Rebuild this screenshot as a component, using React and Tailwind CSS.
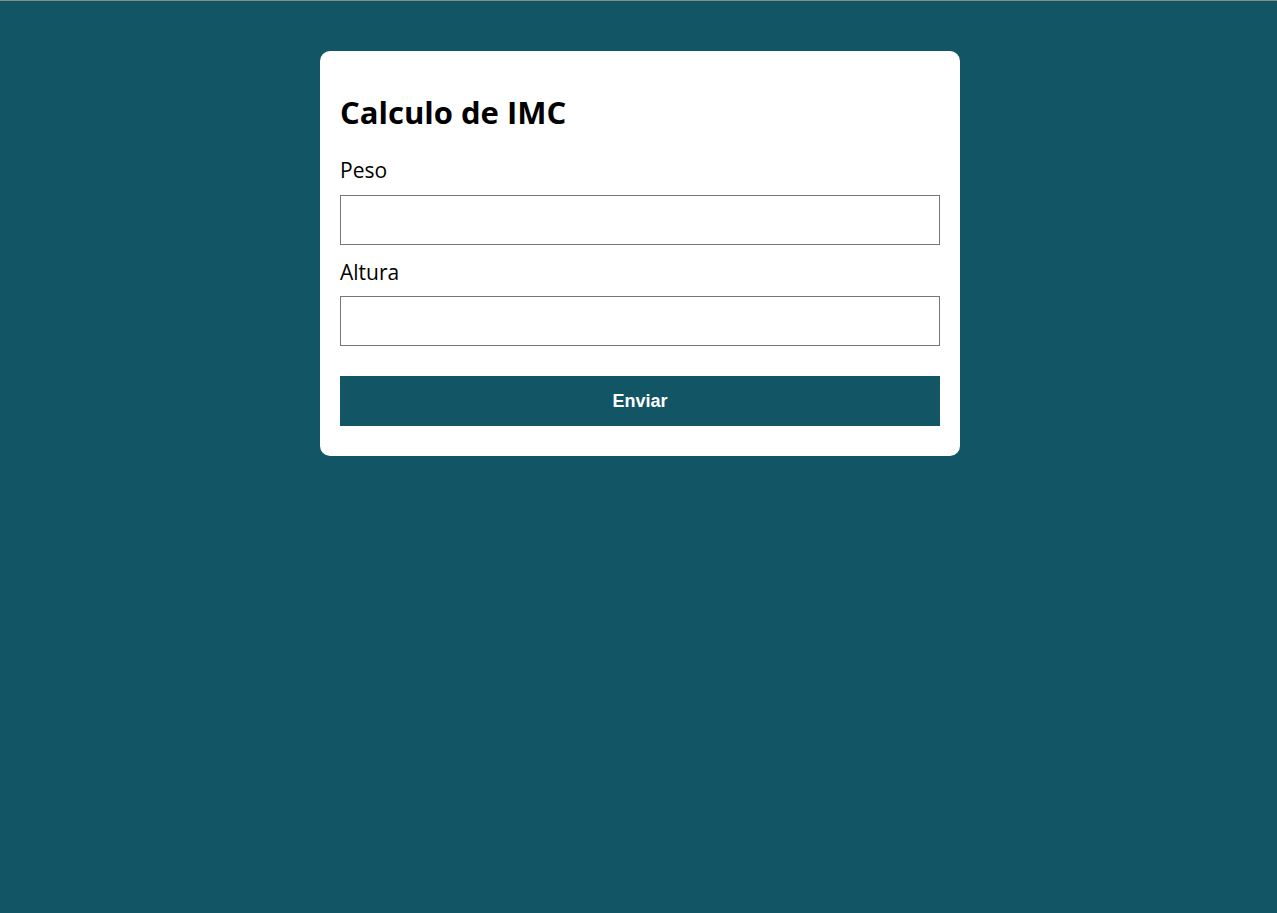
import React, { useState } from "react";

function App() {
  const [peso, setPeso] = useState("");
  const [altura, setAltura] = useState("");

  return (
    <div className="min-h-screen bg-[#125666] border-t border-[#8a8a8a] pt-[50px] pl-[3px]" style={{ fontFamily: "'Open Sans', sans-serif" }}>
      <form
        className="mx-auto w-[640px] bg-white rounded-[10px] px-5 pt-[39px] pb-[30px] flex flex-col"
        onSubmit={(e) => e.preventDefault()}
      >
        <h1 className="text-[31px] leading-[44px] font-bold text-black">Calculo de IMC</h1>
        <label className="mt-[23px] mb-[11px] text-[21px] leading-[27px] text-black">Peso</label>
        <input
          className="h-[50px] border border-[#767676] px-2 text-[16px] outline-none"
          value={peso}
          onChange={(e) => setPeso(e.target.value)}
        />
        <label className="mt-[14px] mb-[10px] text-[21px] leading-[27px] text-black">Altura</label>
        <input
          className="h-[50px] border border-[#767676] px-2 text-[16px] outline-none"
          value={altura}
          onChange={(e) => setAltura(e.target.value)}
        />
        <button
          type="submit"
          className="mt-[30px] h-[50px] bg-[#125666] text-white font-bold text-[18px]"
          style={{ fontFamily: "'Liberation Sans', Arial, sans-serif" }}
        >
          Enviar
        </button>
      </form>
    </div>
  );
}

export default App;
